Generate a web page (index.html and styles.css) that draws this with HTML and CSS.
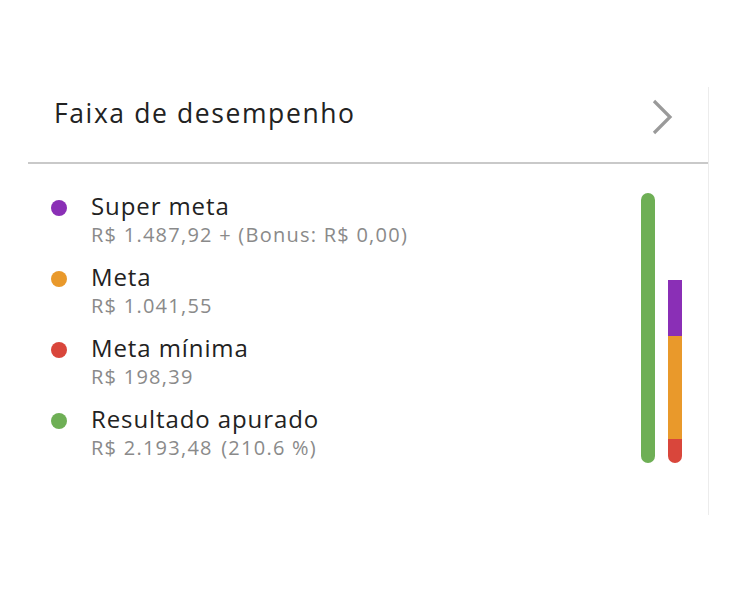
FILE: index.html
```html
<!DOCTYPE html>
<html lang="pt">
<head>
<meta charset="utf-8">
<link rel="stylesheet" href="styles.css">
</head>
<body>
<div class="card">
  <div class="header">
    <span class="title">Faixa de desempenho</span>
    <svg class="chev" width="22" height="36" viewBox="0 0 22 36"><path d="M2 2 L18 18 L2 34" fill="none" stroke="#9a9a9a" stroke-width="3.2"/></svg>
  </div>
  <div class="body">
    <ul class="legend">
      <li class="item"><span class="dot purple"></span><div><div class="name">Super meta</div><div class="val">R$ 1.487,92 + (Bonus: R$ 0,00)</div></div></li>
      <li class="item"><span class="dot orange"></span><div><div class="name">Meta</div><div class="val">R$ 1.041,55</div></div></li>
      <li class="item"><span class="dot red"></span><div><div class="name">Meta mínima</div><div class="val">R$ 198,39</div></div></li>
      <li class="item"><span class="dot green"></span><div><div class="name">Resultado apurado</div><div class="val">R$ 2.193,48 <span class="pct">(210.6 %)</span></div></div></li>
    </ul>
    <div class="chart">
      <div class="bar result"></div>
      <div class="bar stack">
        <div class="seg purple" style="height:56px"></div>
        <div class="seg orange" style="height:103px"></div>
        <div class="seg red" style="height:24px"></div>
      </div>
    </div>
  </div>
</div>
</body>
</html>
```
FILE: styles.css
```css
html, body { margin: 0; padding: 0; background: #fff; }
body { font-family: "Open Sans", Lato, sans-serif; color: #222; }
.card {
  margin: 87px 0 0 28px;
  width: 680px;
  height: 428px;
  border-right: 1px solid #ececec;
}
.header {
  height: 75px;
  border-bottom: 2px solid #c9c9c9;
  display: flex;
  align-items: center;
  justify-content: space-between;
  padding: 0 34px 0 26px;
}
.title { font-size: 26.5px; color: #222; letter-spacing: 1.6px; position: relative; top: -12px; }
.chev { position: relative; top: -8px; }
.body {
  display: flex;
  justify-content: space-between;
  padding: 26px 26px 0 22px;
}
.legend { list-style: none; margin: 0; padding: 0; }
.item { display: flex; align-items: flex-start; height: 71px; }
.dot { width: 16px; height: 16px; border-radius: 50%; margin: 10px 24px 0 1px; flex: none; }
.name { font-size: 24px; line-height: 32px; color: #222; letter-spacing: 0.9px; }
.val { font-size: 20px; line-height: 26px; color: #8a8a8a; letter-spacing: 1.25px; }
.pct { margin-left: 2px; }
.purple { background: #8a2fb6; }
.orange { background: #e9992b; }
.red { background: #d9463b; }
.green { background: #6eaf55; }
.chart { display: flex; align-items: flex-end; gap: 13px; height: 270px; padding-top: 3px; }
.bar { width: 14px; border-radius: 0 0 7px 7px; overflow: hidden; }
.result { height: 270px; background: #6eaf55; border-radius: 7px; }
.stack { display: flex; flex-direction: column; }
.seg { width: 100%; }
```
